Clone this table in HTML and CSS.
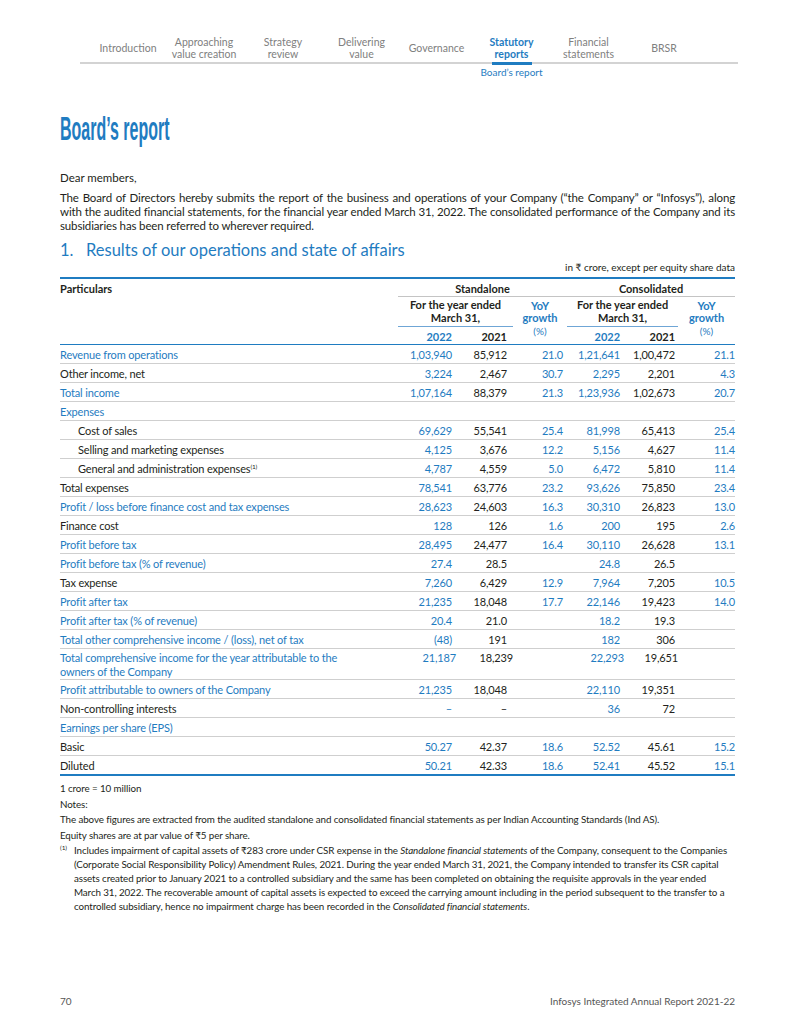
FILE: index.html
```html
<!DOCTYPE html>
<html lang="en">
<head>
<meta charset="utf-8">
<title>Board’s report</title>
<link rel="stylesheet" href="styles.css">
</head>
<body>
<div class="page">
  <header class="topnav">
    <nav class="navbar">
      <div class="tabs">
        <div class="tab">Introduction</div>
        <div class="tab">Approaching<br>value creation</div>
        <div class="tab">Strategy<br>review</div>
        <div class="tab">Delivering<br>value</div>
        <div class="tab">Governance</div>
        <div class="tab active">Statutory<br>reports</div>
        <div class="tab">Financial<br>statements</div>
        <div class="tab">BRSR</div>
      </div>
    </nav>
    <div class="subnav"><span class="sub-active">Board’s report</span></div>
  </header>

  <main class="content">
    <h1 class="title"><span>Board’s report</span></h1>
    <p class="greet">Dear members,</p>
    <p class="intro">The Board of Directors hereby submits the report of the business and operations of your Company (“the Company” or “Infosys”), along with the audited financial statements, for the financial year ended March 31, 2022. The consolidated performance of the Company and its subsidiaries has been referred to wherever required.</p>

    <h2 class="section"><span class="num">1.</span>Results of our operations and state of affairs</h2>
    <p class="units">in ₹ crore, except per equity share data</p>

    <table class="fin">
      <colgroup>
        <col class="w-label"><col class="w-c1"><col class="w-c2"><col class="w-c3"><col class="w-c4"><col class="w-c5"><col class="w-c6">
      </colgroup>
      <thead>
        <tr class="h1">
          <th class="part" rowspan="3">Particulars</th>
          <th class="grp" colspan="3">Standalone</th>
          <th class="grp" colspan="3">Consolidated</th>
        </tr>
        <tr class="h2">
          <th class="yr" colspan="2">For the year ended<br>March 31,</th>
          <th class="yoy" rowspan="2">YoY<br>growth<br><span class="pct">(%)</span></th>
          <th class="yr" colspan="2">For the year ended<br>March 31,</th>
          <th class="yoy" rowspan="2">YoY<br>growth<br><span class="pct">(%)</span></th>
        </tr>
        <tr class="h3">
          <th class="y22">2022</th>
          <th class="y21">2021</th>
          <th class="y22 y22c">2022</th>
          <th class="y21 y21c">2021</th>
        </tr>
      </thead>
      <tbody>
        <tr class="b"><td>Revenue from operations</td><td>1,03,940</td><td>85,912</td><td>21.0</td><td>1,21,641</td><td>1,00,472</td><td>21.1</td></tr>
        <tr><td>Other income, net</td><td>3,224</td><td>2,467</td><td>30.7</td><td>2,295</td><td>2,201</td><td>4.3</td></tr>
        <tr class="b"><td>Total income</td><td>1,07,164</td><td>88,379</td><td>21.3</td><td>1,23,936</td><td>1,02,673</td><td>20.7</td></tr>
        <tr class="b"><td>Expenses</td><td></td><td></td><td></td><td></td><td></td><td></td></tr>
        <tr class="ind"><td>Cost of sales</td><td>69,629</td><td>55,541</td><td>25.4</td><td>81,998</td><td>65,413</td><td>25.4</td></tr>
        <tr class="ind"><td>Selling and marketing expenses</td><td>4,125</td><td>3,676</td><td>12.2</td><td>5,156</td><td>4,627</td><td>11.4</td></tr>
        <tr class="ind"><td>General and administration expenses<sup>(1)</sup></td><td>4,787</td><td>4,559</td><td>5.0</td><td>6,472</td><td>5,810</td><td>11.4</td></tr>
        <tr><td>Total expenses</td><td>78,541</td><td>63,776</td><td>23.2</td><td>93,626</td><td>75,850</td><td>23.4</td></tr>
        <tr class="b"><td>Profit / loss before finance cost and tax expenses</td><td>28,623</td><td>24,603</td><td>16.3</td><td>30,310</td><td>26,823</td><td>13.0</td></tr>
        <tr><td>Finance cost</td><td>128</td><td>126</td><td>1.6</td><td>200</td><td>195</td><td>2.6</td></tr>
        <tr class="b"><td>Profit before tax</td><td>28,495</td><td>24,477</td><td>16.4</td><td>30,110</td><td>26,628</td><td>13.1</td></tr>
        <tr class="b"><td>Profit before tax (% of revenue)</td><td>27.4</td><td>28.5</td><td></td><td>24.8</td><td>26.5</td><td></td></tr>
        <tr><td>Tax expense</td><td>7,260</td><td>6,429</td><td>12.9</td><td>7,964</td><td>7,205</td><td>10.5</td></tr>
        <tr class="b"><td>Profit after tax</td><td>21,235</td><td>18,048</td><td>17.7</td><td>22,146</td><td>19,423</td><td>14.0</td></tr>
        <tr class="b"><td>Profit after tax (% of revenue)</td><td>20.4</td><td>21.0</td><td></td><td>18.2</td><td>19.3</td><td></td></tr>
        <tr class="b"><td>Total other comprehensive income / (loss), net of tax</td><td>(48)</td><td>191</td><td></td><td>182</td><td>306</td><td></td></tr>
        <tr class="b two"><td>Total comprehensive income for the year attributable to the<br>owners of the Company</td><td>21,187</td><td>18,239</td><td></td><td>22,293</td><td>19,651</td><td></td></tr>
        <tr class="b"><td>Profit attributable to owners of the Company</td><td>21,235</td><td>18,048</td><td></td><td>22,110</td><td>19,351</td><td></td></tr>
        <tr><td>Non-controlling interests</td><td>–</td><td>–</td><td></td><td>36</td><td>72</td><td></td></tr>
        <tr class="b"><td>Earnings per share (EPS)</td><td></td><td></td><td></td><td></td><td></td><td></td></tr>
        <tr><td>Basic</td><td>50.27</td><td>42.37</td><td>18.6</td><td>52.52</td><td>45.61</td><td>15.2</td></tr>
        <tr><td>Diluted</td><td>50.21</td><td>42.33</td><td>18.6</td><td>52.41</td><td>45.52</td><td>15.1</td></tr>
      </tbody>
    </table>

    <div class="notes">
      <p>1 crore = 10 million</p>
      <p>Notes:</p>
      <p>The above figures are extracted from the audited standalone and consolidated financial statements as per Indian Accounting Standards (Ind AS).</p>
      <p>Equity shares are at par value of ₹5 per share.</p>
      <p class="fn"><sup class="fn-mark">(1)</sup>Includes impairment of capital assets of ₹283 crore under CSR expense in the <em>Standalone financial statements</em> of the Company, consequent to the Companies (Corporate Social Responsibility Policy) Amendment Rules, 2021. During the year ended March 31, 2021, the Company intended to transfer its CSR capital assets created prior to January 2021 to a controlled subsidiary and the same has been completed on obtaining the requisite approvals in the year ended March 31, 2022. The recoverable amount of capital assets is expected to exceed the carrying amount including in the period subsequent to the transfer to a controlled subsidiary, hence no impairment charge has been recorded in the <em>Consolidated financial statements</em>.</p>
    </div>
  </main>

  <footer class="footer">
    <span>70</span>
    <span>Infosys Integrated Annual Report 2021-22</span>
  </footer>
</div>
</body>
</html>
```

FILE: styles.css
```css
* { box-sizing: border-box; }
body { margin: 0; background: #fff; color: #231f20; font-family: "Lato", "Open Sans", sans-serif; }
.page { width: 800px; height: 1035px; display: flex; flex-direction: column; overflow: hidden; }

/* top navigation */
.navbar { margin: 34px 0 0 80px; width: 658px; border-bottom: 2px solid #d3d3d3; }
.tabs { display: grid; grid-template-columns: 74px 78px 80px 77px 73px 77px 77px 74px; padding-left: 11px; height: 28px; }
.tab { position: relative; display: flex; align-items: center; justify-content: center; text-align: center; font-size: 10.5px; line-height: 12.5px; color: #808080; }
.tab.active { color: #1f7cc1; font-weight: 700; }
.tab.active::after { content: ""; position: absolute; left: 50%; bottom: -3px; width: 40px; margin-left: -20px; height: 3px; background: #1f7cc1; }
.subnav { margin-left: 80px; display: grid; grid-template-columns: 74px 78px 80px 77px 73px 77px 77px 74px; padding-left: 11px; }
.sub-active { grid-column: 6; text-align: center; font-size: 10px; line-height: 16px; color: #1f7cc1; }

/* content */
.content { flex: 1; padding: 0 65px 0 60px; }
.title { margin: 30px 0 0; font-family: "Liberation Sans", sans-serif; font-size: 34px; line-height: 36px; font-weight: 700; color: #1f7cc1; }
.title span { display: inline-block; transform: scaleX(0.47); transform-origin: left center; white-space: nowrap; }
.greet { margin: 25px 0 0; font-size: 11.5px; line-height: 14px; }
.intro { margin: 6px 0 0; font-size: 11.5px; line-height: 14px; text-align: justify; letter-spacing: -0.14px; }
.section { margin: 7px 0 0; font-size: 16.5px; font-weight: 400; color: #1f7cc1; line-height: 20px; }
.section .num { display: inline-block; width: 26px; }
.units { margin: 0; height: 14px; text-align: right; font-size: 10px; line-height: 14px; }

/* table */
.fin { width: 675px; table-layout: fixed; border-collapse: collapse; margin-top: 3px; border-top: 2px solid #1f7cc1; border-bottom: 2px solid #1f7cc1; font-size: 11px; }
.w-label { width: 338px; }
.w-c1 { width: 58px; }
.w-c2 { width: 57px; }
.w-c3 { width: 54px; }
.w-c4 { width: 57px; }
.w-c5 { width: 54px; }
.w-c6 { width: 57px; }

.fin th { font-weight: 700; line-height: 13px; padding: 0; vertical-align: top; }
.fin .part { text-align: left; padding-top: 2.5px; }
.fin .grp { text-align: center; padding: 2.5px 0 1px; border-bottom: 1px solid #c4c4c4; }
.fin .yr { text-align: center; padding: 1.5px 0 2px; border-bottom: 1px solid #6fa6d6; }
.fin .yoy { color: #1f7cc1; text-align: center; line-height: 12.5px; padding: 3px 0 0; }
.fin .pct { font-weight: 400; font-size: 10px; }
.fin .h3 th { padding: 2.5px 4px 1.5px 0; text-align: right; }
.fin .h3 .y21 { padding-right: 6px; }
.fin .h3 .y22c { padding-right: 4px; }
.fin .h3 .y21c { padding-right: 3px; }
.fin .y22 { color: #1f7cc1; }
.fin thead tr.h3 { border-bottom: 1px solid #1f7cc1; }

.fin td { padding: 3px 0 2px; line-height: 13px; vertical-align: top; text-align: right; letter-spacing: -0.15px; }
.fin tbody tr { border-bottom: 1px solid #cfcfcf; }
.fin tbody tr:last-child { border-bottom: 0; }
.fin td:first-child { text-align: left; }
.fin td:nth-child(2) { padding-right: 4px; color: #1f7cc1; }
.fin td:nth-child(3) { padding-right: 6px; }
.fin td:nth-child(4) { padding-right: 4px; color: #1f7cc1; }
.fin td:nth-child(5) { padding-right: 4px; color: #1f7cc1; }
.fin td:nth-child(6) { padding-right: 3px; }
.fin td:nth-child(7) { color: #1f7cc1; }
.fin tr.b td:first-child { color: #1f7cc1; }
.fin tr.two td { padding: 2px 0 1px; }
.fin tr.two td:first-child { line-height: 13.5px; }
.fin tr.ind td:first-child { padding-left: 18px; }
.fin sup { font-size: 6.5px; line-height: 0; vertical-align: 4px; }

/* notes */
.notes { margin-top: 5px; font-size: 9.8px; line-height: 14px; letter-spacing: -0.1px; }
.notes p { margin: 0 0 1.5px; }
.notes .fn { position: relative; padding-left: 14px; }
.notes .fn-mark { position: absolute; left: 0; top: 0; font-size: 6.5px; line-height: 10px; vertical-align: baseline; }

.footer { display: flex; justify-content: space-between; padding: 0 65px 28px 60px; font-size: 10px; color: #555; }
```
